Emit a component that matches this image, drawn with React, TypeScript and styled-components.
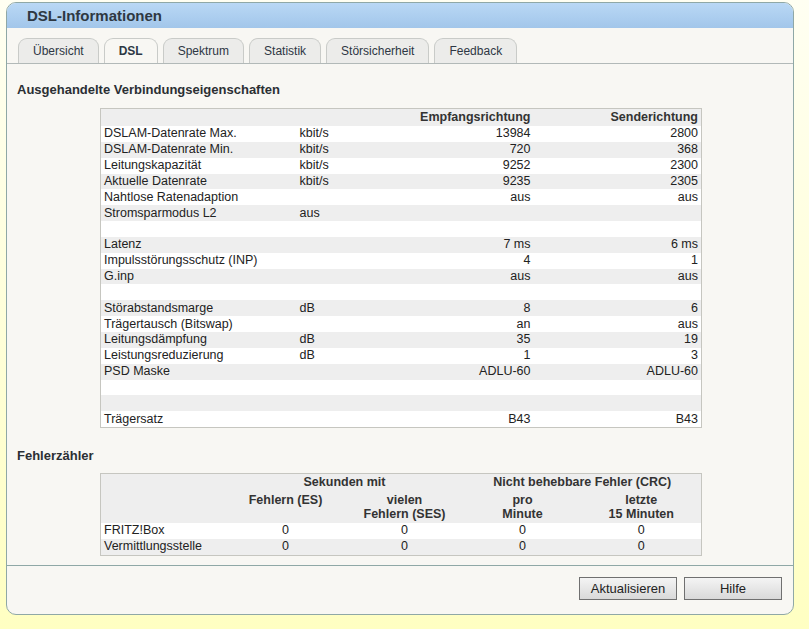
import React from "react"
import styled, { createGlobalStyle } from "styled-components"

const GlobalStyle = createGlobalStyle`
  html, body {
    margin: 0;
    padding: 0;
  }
  body {
    min-height: 629px;
    background: linear-gradient(#fffff2, #ffffc2);
    font-family: "Liberation Sans", Arial, sans-serif;
    color: #222;
  }
`

const Page = styled.div`
  padding: 2px 15px 14px 6px;
`

const Panel = styled.div`
  width: 786px;
  height: 611px;
  border: 1px solid #8fa8a6;
  border-radius: 10px;
  background: #f8f7f3;
  display: flex;
  flex-direction: column;
  overflow: hidden;
`

const Header = styled.div`
  height: 25px;
  flex-shrink: 0;
  background: linear-gradient(#b9d8f5, #a2c6ea);
  display: flex;
  align-items: center;
  padding-left: 20px;
  font-size: 15px;
  font-weight: bold;
  color: #2e3842;
`

const TabBar = styled.div`
  display: flex;
  flex-shrink: 0;
  gap: 5px;
  padding: 10px 0 0 11px;
  border-bottom: 1px solid #b2b9b8;
`

const Tab = styled.div<{ $active?: boolean }>`
  height: 24px;
  padding: 0 14px;
  display: flex;
  align-items: center;
  justify-content: center;
  font-size: 12px;
  font-weight: ${(p) => (p.$active ? "bold" : "normal")};
  color: #2e3744;
  background: ${(p) => (p.$active ? "#f8f7f3" : "#ececea")};
  border: 1px solid #c9cbc8;
  border-bottom: none;
  border-radius: 9px 9px 0 0;
  margin-bottom: ${(p) => (p.$active ? "-1px" : "0")};
  position: relative;
`

const Content = styled.div`
  flex: 1;
  padding: 18px 0 0 10px;
`

const SectionTitle = styled.div<{ $top?: number }>`
  font-size: 13px;
  font-weight: bold;
  line-height: 16px;
  color: #2b2f33;
  margin-top: ${(p) => p.$top || 0}px;
`

const DataTable = styled.table<{ $top?: number }>`
  margin: ${(p) => p.$top || 0}px 0 0 83px;
  width: 601px;
  border-collapse: collapse;
  border: 1px solid #c6c6c0;
  font-size: 12.5px;
  color: #222;
  table-layout: fixed;

  td, th {
    padding: 0 3px;
    height: 15.85px;
    line-height: 15px;
    white-space: nowrap;
  }
  th {
    font-weight: bold;
    color: #333;
  }
`

const HeadRow = styled.tr`
  background: #eeeeee;
`

const Row = styled.tr<{ $odd: boolean }>`
  background: ${(p) => (p.$odd ? "#eeeeee" : "#ffffff")};
`

const Num = styled.td`
  text-align: right;
`

const NumHead = styled.th`
  text-align: right;
  && {
    height: 17px;
  }
`

const Center = styled.td`
  text-align: center;
`

const GroupHead = styled.th`
  text-align: center;
  vertical-align: top;
  && {
    line-height: 16px;
    height: 17px;
  }
`

const SubHead = styled.th`
  text-align: center;
  vertical-align: top;
  && {
    line-height: 14px;
    height: 32px;
    padding-top: 2px;
    padding-bottom: 0;
    box-sizing: border-box;
  }
`

const Footer = styled.div`
  height: 49px;
  flex-shrink: 0;
  border-top: 1px solid #8fa8a6;
  display: flex;
  justify-content: flex-end;
  align-items: flex-start;
  gap: 7px;
  padding: 11px 11px 0 0;
  box-sizing: border-box;
`

const Button = styled.button`
  width: 98px;
  height: 23px;
  border: 1px solid #707070;
  background: linear-gradient(#f4f4f4, #d9d9d9);
  font-family: "Liberation Sans", Arial, sans-serif;
  font-size: 13px;
  color: #222;
  padding: 0;
`

const rows: [string, string, string, string][] = [
  ["DSLAM-Datenrate Max.", "kbit/s", "13984", "2800"],
  ["DSLAM-Datenrate Min.", "kbit/s", "720", "368"],
  ["Leitungskapazität", "kbit/s", "9252", "2300"],
  ["Aktuelle Datenrate", "kbit/s", "9235", "2305"],
  ["Nahtlose Ratenadaption", "", "aus", "aus"],
  ["Stromsparmodus L2", "aus", "", ""],
  ["", "", "", ""],
  ["Latenz", "", "7 ms", "6 ms"],
  ["Impulsstörungsschutz (INP)", "", "4", "1"],
  ["G.inp", "", "aus", "aus"],
  ["", "", "", ""],
  ["Störabstandsmarge", "dB", "8", "6"],
  ["Trägertausch (Bitswap)", "", "an", "aus"],
  ["Leitungsdämpfung", "dB", "35", "19"],
  ["Leistungsreduzierung", "dB", "1", "3"],
  ["PSD Maske", "", "ADLU-60", "ADLU-60"],
  ["", "", "", ""],
  ["", "", "", ""],
  ["Trägersatz", "", "B43", "B43"],
]

const errors: [string, string, string, string, string][] = [
  ["FRITZ!Box", "0", "0", "0", "0"],
  ["Vermittlungsstelle", "0", "0", "0", "0"],
]

const tabs = ["Übersicht", "DSL", "Spektrum", "Statistik", "Störsicherheit", "Feedback"]

export default function App() {
  return (
    <>
      <GlobalStyle />
      <Page>
        <Panel>
          <Header>DSL-Informationen</Header>
          <TabBar>
            {tabs.map((t) => (
              <Tab key={t} $active={t === "DSL"}>
                {t}
              </Tab>
            ))}
          </TabBar>
          <Content>
            <SectionTitle>Ausgehandelte Verbindungseigenschaften</SectionTitle>
            <DataTable $top={10}>
              <colgroup>
                <col style={{ width: 196 }} />
                <col style={{ width: 100 }} />
                <col style={{ width: 137 }} />
                <col style={{ width: 168 }} />
              </colgroup>
              <thead>
                <HeadRow>
                  <NumHead />
                  <NumHead />
                  <NumHead>Empfangsrichtung</NumHead>
                  <NumHead>Senderichtung</NumHead>
                </HeadRow>
              </thead>
              <tbody>
                {rows.map((r, i) => (
                  <Row key={i} $odd={i % 2 === 1}>
                    <td>{r[0]}</td>
                    <td>{r[1]}</td>
                    <Num>{r[2]}</Num>
                    <Num>{r[3]}</Num>
                  </Row>
                ))}
              </tbody>
            </DataTable>

            <SectionTitle $top={20}>Fehlerzähler</SectionTitle>
            <DataTable $top={9}>
              <colgroup>
                <col style={{ width: 125 }} />
                <col style={{ width: 120 }} />
                <col style={{ width: 118 }} />
                <col style={{ width: 118 }} />
                <col style={{ width: 120 }} />
              </colgroup>
              <thead>
                <HeadRow>
                  <GroupHead />
                  <GroupHead colSpan={2}>Sekunden mit</GroupHead>
                  <GroupHead colSpan={2}>Nicht behebbare Fehler (CRC)</GroupHead>
                </HeadRow>
                <HeadRow>
                  <SubHead />
                  <SubHead>Fehlern (ES)</SubHead>
                  <SubHead>
                    vielen
                    <br />
                    Fehlern (SES)
                  </SubHead>
                  <SubHead>
                    pro
                    <br />
                    Minute
                  </SubHead>
                  <SubHead>
                    letzte
                    <br />
                    15 Minuten
                  </SubHead>
                </HeadRow>
              </thead>
              <tbody>
                {errors.map((r, i) => (
                  <Row key={r[0]} $odd={i % 2 === 1}>
                    <td>{r[0]}</td>
                    <Center>{r[1]}</Center>
                    <Center>{r[2]}</Center>
                    <Center>{r[3]}</Center>
                    <Center>{r[4]}</Center>
                  </Row>
                ))}
              </tbody>
            </DataTable>
          </Content>
          <Footer>
            <Button>Aktualisieren</Button>
            <Button>Hilfe</Button>
          </Footer>
        </Panel>
      </Page>
    </>
  )
}
